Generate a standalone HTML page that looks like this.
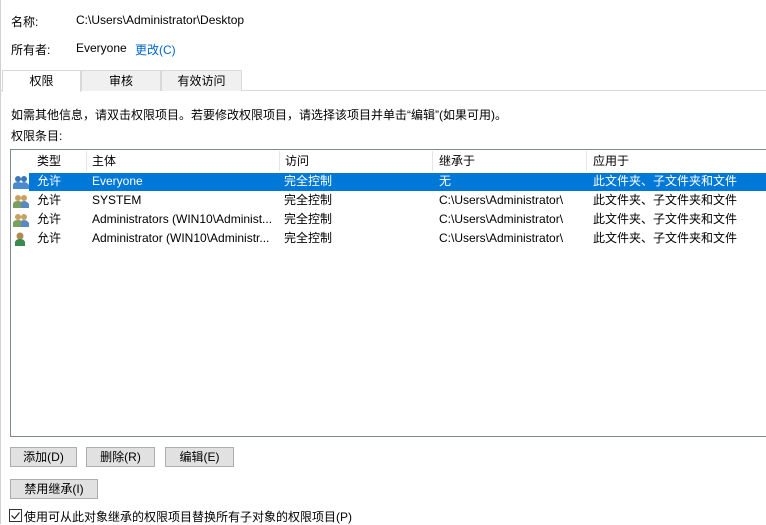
<!DOCTYPE html>
<html><head><meta charset="utf-8"><style>
*{margin:0;padding:0;box-sizing:border-box}
body{width:766px;height:524px;overflow:hidden;background:#fff;font-family:"Liberation Sans","Noto Sans CJK SC",sans-serif;font-size:12px;color:#000;position:relative}
.a{position:absolute;white-space:nowrap}
.tab{position:absolute;top:70px;height:21px;border:1px solid #d9d9d9;border-bottom:none;background:#f0f0f0;text-align:center;line-height:20px}
.btn{position:absolute;height:20px;border:1px solid #adadad;background:#e1e1e1;text-align:center;line-height:18px}
.row{position:absolute;left:11px;width:755px;height:19px;line-height:19px}
.row span{position:absolute;top:0}
</style></head><body>
<div class="a" style="left:0;top:0;width:1px;height:524px;background:#d0d0d0"></div>
<div class="a" style="left:11px;top:13px">名称:</div>
<div class="a" style="left:76px;top:13px">C:\Users\Administrator\Desktop</div>
<div class="a" style="left:11px;top:41px">所有者:</div>
<div class="a" style="left:76px;top:41px">Everyone</div>
<div class="a" style="left:135px;top:41px;color:#0066cc">更改(C)</div>
<div class="a" style="left:0;top:90px;width:766px;height:1px;background:#d9d9d9"></div>
<div class="tab" style="left:2px;width:79px;background:#fff;height:22px;z-index:2">权限</div>
<div class="tab" style="left:81px;width:80px">审核</div>
<div class="tab" style="left:161px;width:81px">有效访问</div>
<div class="a" style="left:11px;top:106px">如需其他信息，请双击权限项目。若要修改权限项目，请选择该项目并单击“编辑”(如果可用)。</div>
<div class="a" style="left:11px;top:127px">权限条目:</div>
<div class="a" style="left:10px;top:149px;width:760px;height:288px;border:1px solid #828790"></div>
<div class="row" style="top:151px;height:20px;line-height:20px">
<span style="left:26px">类型</span><span style="left:81px">主体</span><span style="left:274px">访问</span><span style="left:428px">继承于</span><span style="left:582px">应用于</span>
</div>
<div class="a" style="left:86px;top:151px;width:1px;height:20px;background:#e5e5e5"></div>
<div class="a" style="left:279px;top:151px;width:1px;height:20px;background:#e5e5e5"></div>
<div class="a" style="left:432px;top:151px;width:1px;height:20px;background:#e5e5e5"></div>
<div class="a" style="left:586px;top:151px;width:1px;height:20px;background:#e5e5e5"></div>
<div class="a" style="left:29px;top:173px;width:737px;height:18px;background:#0078d7"></div>
<div class="row" style="top:172px;color:#fff"><span style="left:26px">允许</span><span style="left:81px">Everyone</span><span style="left:273px">完全控制</span><span style="left:428px">无</span><span style="left:582px">此文件夹、子文件夹和文件</span></div>
<div class="row" style="top:191px"><span style="left:26px">允许</span><span style="left:81px">SYSTEM</span><span style="left:273px">完全控制</span><span style="left:428px">C:\Users\Administrator\</span><span style="left:582px">此文件夹、子文件夹和文件</span></div>
<div class="row" style="top:210px"><span style="left:26px">允许</span><span style="left:81px">Administrators (WIN10\Administ...</span><span style="left:273px">完全控制</span><span style="left:428px">C:\Users\Administrator\</span><span style="left:582px">此文件夹、子文件夹和文件</span></div>
<div class="row" style="top:229px"><span style="left:26px">允许</span><span style="left:81px">Administrator (WIN10\Administr...</span><span style="left:273px">完全控制</span><span style="left:428px">C:\Users\Administrator\</span><span style="left:582px">此文件夹、子文件夹和文件</span></div>
<svg class="a" style="left:13px;top:174px" width="16" height="16"><circle cx="5" cy="5" r="3" fill="#3a78b8"/><circle cx="11" cy="5" r="3" fill="#3a78b8"/><path d="M0 15v-4q0-3 5-3t5 3v4zM8 15v-4q0-3 3-3t5 3v4z" fill="#4a8ad0"/></svg>
<svg class="a" style="left:13px;top:193px" width="16" height="16"><circle cx="5" cy="5" r="3" fill="#c8a060"/><circle cx="11" cy="5" r="3" fill="#c8a060"/><path d="M0 15v-4q0-3 5-3t5 3v4z" fill="#7aa060"/><path d="M8 15v-4q0-3 3-3t5 3v4z" fill="#5a88c0"/></svg>
<svg class="a" style="left:13px;top:212px" width="16" height="16"><circle cx="5" cy="5" r="3" fill="#c8a060"/><circle cx="11" cy="5" r="3" fill="#c8a060"/><path d="M0 15v-4q0-3 5-3t5 3v4z" fill="#7aa060"/><path d="M8 15v-4q0-3 3-3t5 3v4z" fill="#5a88c0"/></svg>
<svg class="a" style="left:13px;top:231px" width="16" height="16"><circle cx="7" cy="5" r="3.5" fill="#b08850"/><path d="M2 15v-3q0-4 5-4t5 4v3z" fill="#3a8a50"/></svg>
<div class="btn" style="left:10px;top:447px;width:67px">添加(D)</div>
<div class="btn" style="left:86px;top:447px;width:69px">删除(R)</div>
<div class="btn" style="left:165px;top:447px;width:69px">编辑(E)</div>
<div class="btn" style="left:10px;top:479px;width:88px">禁用继承(I)</div>
<svg class="a" style="left:9px;top:509px" width="13" height="13"><rect x=".5" y=".5" width="12" height="12" fill="#fff" stroke="#333"/><path d="M2.5 6.5l3 3 5-6" fill="none" stroke="#222" stroke-width="1.2"/></svg>
<div class="a" style="left:24px;top:508px">使用可从此对象继承的权限项目替换所有子对象的权限项目(P)</div>
</body></html>
